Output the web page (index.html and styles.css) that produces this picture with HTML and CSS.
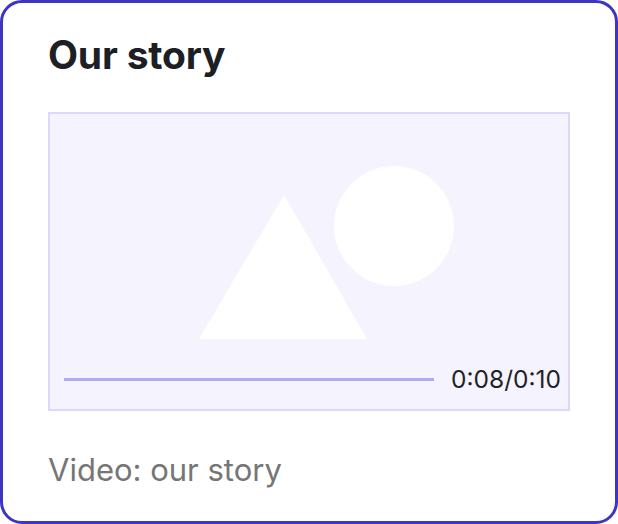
FILE: index.html
```html
<!DOCTYPE html>
<html lang="en">
<head>
    <meta charset="UTF-8">
    <meta name="viewport" content="width=device-width, initial-scale=1.0">
    <title>Our story</title>
    <link rel="stylesheet" href="styles.css">
</head>
<body>
    <div class="card">
        <h1 class="card-title">Our story</h1>

        <!-- Video placeholder -->
        <div class="video">
            <svg class="video-art" width="518" height="295" viewBox="0 0 518 295">
                <polygon points="234,81 317,225 149,225" fill="#ffffff"/>
                <circle cx="344" cy="112" r="60" fill="#ffffff"/>
            </svg>
            <div class="video-controls">
                <div class="progress"></div>
                <span class="time">0:08/0:10</span>
            </div>
        </div>

        <p class="caption">Video: our story</p>
    </div>
</body>
</html>
```

FILE: styles.css
```css
body {
    margin: 0;
    background-color: #ffffff;
    font-family: Inter, "Noto Sans", sans-serif;
}

.card {
    box-sizing: border-box;
    width: 618px;
    height: 524px;
    border: 3px solid #3d36c4;
    border-radius: 22px;
    padding: 28px 45px 0 45px;
    background-color: #ffffff;
}

.card-title {
    margin: 0 0 33px 0;
    font-size: 39px;
    line-height: 48px;
    font-weight: 700;
    letter-spacing: -0.2px;
    color: #1c2024;
}

.video {
    position: relative;
    width: 518px;
    height: 295px;
    border: 2px solid #dad9fb;
    background-color: #f4f3fe;
}

.video-art {
    display: block;
}

/* controls sit over the bottom of the picture */
.video-controls {
    position: absolute;
    left: 14px;
    right: 7px;
    bottom: 18px;
    height: 24px;
    display: flex;
    align-items: center;
    gap: 17px;
}

.progress {
    flex: 1;
    height: 3px;
    background-color: #afabf7;
}

.time {
    font-size: 24.5px;
    line-height: 24px;
    color: #1f2328;
}

.caption {
    margin: 39px 0 0 0;
    font-size: 31px;
    line-height: 40px;
    color: #767676;
}
```
